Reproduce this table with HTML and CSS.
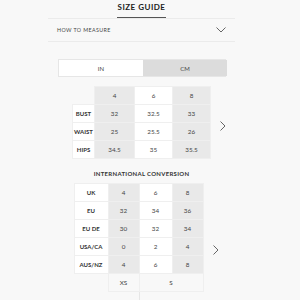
FILE: index.html
```html
<!DOCTYPE html>
<html>
<head>
<meta charset="utf-8">
<link rel="stylesheet" href="styles.css">
</head>
<body>
<div class="page">
  <div class="title-bar"><h1 class="title">SIZE GUIDE</h1></div>
  <div class="measure">
    <span>HOW TO MEASURE</span>
    <svg class="chev-down" width="10" height="6" viewBox="0 0 10 6"><path d="M0.5 0.5 L5 5 L9.5 0.5" fill="none" stroke="#555" stroke-width="0.9"/></svg>
  </div>
  <div class="toggle">
    <div class="opt active">IN</div>
    <div class="opt">CM</div>
  </div>
  <div class="table-row t1">
    <table class="grid">
      <tr class="head"><td class="blank"></td><td class="g">4</td><td class="w">6</td><td class="g">8</td></tr>
      <tr><th>BUST</th><td class="g">32</td><td class="w">32.5</td><td class="g">33</td></tr>
      <tr><th>WAIST</th><td class="g">25</td><td class="w">25.5</td><td class="g">26</td></tr>
      <tr><th>HIPS</th><td class="g">34.5</td><td class="w">35</td><td class="g">35.5</td></tr>
    </table>
    <svg class="chev-right" width="6" height="10" viewBox="0 0 6 10"><path d="M0.5 0.5 L5 5 L0.5 9.5" fill="none" stroke="#555" stroke-width="0.9"/></svg>
  </div>
  <h2 class="sub">INTERNATIONAL CONVERSION</h2>
  <div class="table-row t2">
    <table class="grid conv">
      <tr><th>UK</th><td class="g">4</td><td class="w">6</td><td class="g">8</td></tr>
      <tr><th>EU</th><td class="g">32</td><td class="w">34</td><td class="g">36</td></tr>
      <tr><th>EU DE</th><td class="g">30</td><td class="w">32</td><td class="g">34</td></tr>
      <tr><th>USA/CA</th><td class="g">0</td><td class="w">2</td><td class="g">4</td></tr>
      <tr><th>AUS/NZ</th><td class="g">4</td><td class="w">6</td><td class="g">8</td></tr>
      <tr class="sizes"><td class="blank"></td><td class="p">XS</td><td class="p" colspan="2">S</td></tr>
      <tr class="tail"><td class="blank"></td><td class="tl"></td><td class="blank" colspan="2"></td></tr>
    </table>
    <svg class="chev-right" width="6" height="10" viewBox="0 0 6 10"><path d="M0.5 0.5 L5 5 L0.5 9.5" fill="none" stroke="#555" stroke-width="0.9"/></svg>
  </div>
</div>
</body>
</html>
```
FILE: styles.css
```css
html, body {
  margin: 0;
  padding: 0;
  background: #f8f8f8;
  font-family: Lato, "Open Sans", sans-serif;
  font-variant-numeric: lining-nums;
  color: #333;
  overflow: hidden;
  height: 300px;
}
.page {
  width: 187px;
  margin-left: 48px;
}
.title-bar {
  display: flex;
  justify-content: center;
  border-bottom: 1px solid #ebebeb;
  height: 18px;
}
.title {
  margin: 0;
  font-size: 8px;
  font-weight: 700;
  letter-spacing: 0.5px;
  line-height: 15px;
  padding: 0 1px;
  color: #222;
  border-bottom: 1px solid #555;
  height: 17px;
}
.measure {
  display: flex;
  align-items: center;
  justify-content: space-between;
  height: 22px;
  padding: 0 9px 0 9px;
  border-bottom: 1px solid #ebebeb;
  font-size: 5.3px;
  letter-spacing: 0.4px;
  color: #444;
}
.chev-down { display: block; }
.toggle {
  display: grid;
  grid-template-columns: 84px 84px;
  margin: 17px 0 0 10px;
  height: 18px;
  border: 1px solid #e6e6e6;
  box-sizing: border-box;
  width: 168px;
}
.opt {
  display: flex;
  align-items: center;
  justify-content: center;
  font-size: 6px;
  color: #444;
  background: #dcdcdc;
}
.opt.active { background: #fff; }
.table-row {
  display: grid;
  grid-template-columns: 1fr auto 1fr;
  align-items: center;
}
.table-row .grid { grid-column: 2; }
.chev-right { grid-column: 3; justify-self: start; }
.t1 { margin-top: 9px; }
.t1 .chev-right { margin-left: 9px; margin-top: 6px; }
.grid {
  border-collapse: collapse;
  font-size: 6.3px;
  color: #444;
}
.grid td, .grid th {
  height: 18px;
  padding: 0;
  text-align: center;
  border: 1px solid #efefef;
  box-sizing: border-box;
}
.grid th {
  width: 22px;
  background: #fff;
  font-weight: 700;
  color: #333;
  font-size: 6px;
}
.grid td.g { background: #e9e9e9; width: 40px; }
.grid td.w { background: #fff; width: 38px; }
.grid tr td.g:last-child { width: 38px; }
.grid td.blank { border: none; background: transparent; }
.conv th { width: 34px; }
.conv td.g { width: 31px; }
.conv td.w { width: 33px; }
.conv tr td.g:last-child { width: 31px; }
.conv td.p { background: transparent; }
.conv tr.tail td { height: 8px; }
.conv td.tl { border: none; border-right: 1px solid #e6e6e6; }
.sub {
  margin: 11px 0 0;
  text-align: center;
  font-size: 6px;
  font-weight: 700;
  letter-spacing: 0.3px;
  color: #333;
  line-height: 8px;
}
.t2 { margin-top: 5px; margin-left: -6px; }
.t2 .chev-right { margin-left: 9px; margin-top: 18px; }
```
